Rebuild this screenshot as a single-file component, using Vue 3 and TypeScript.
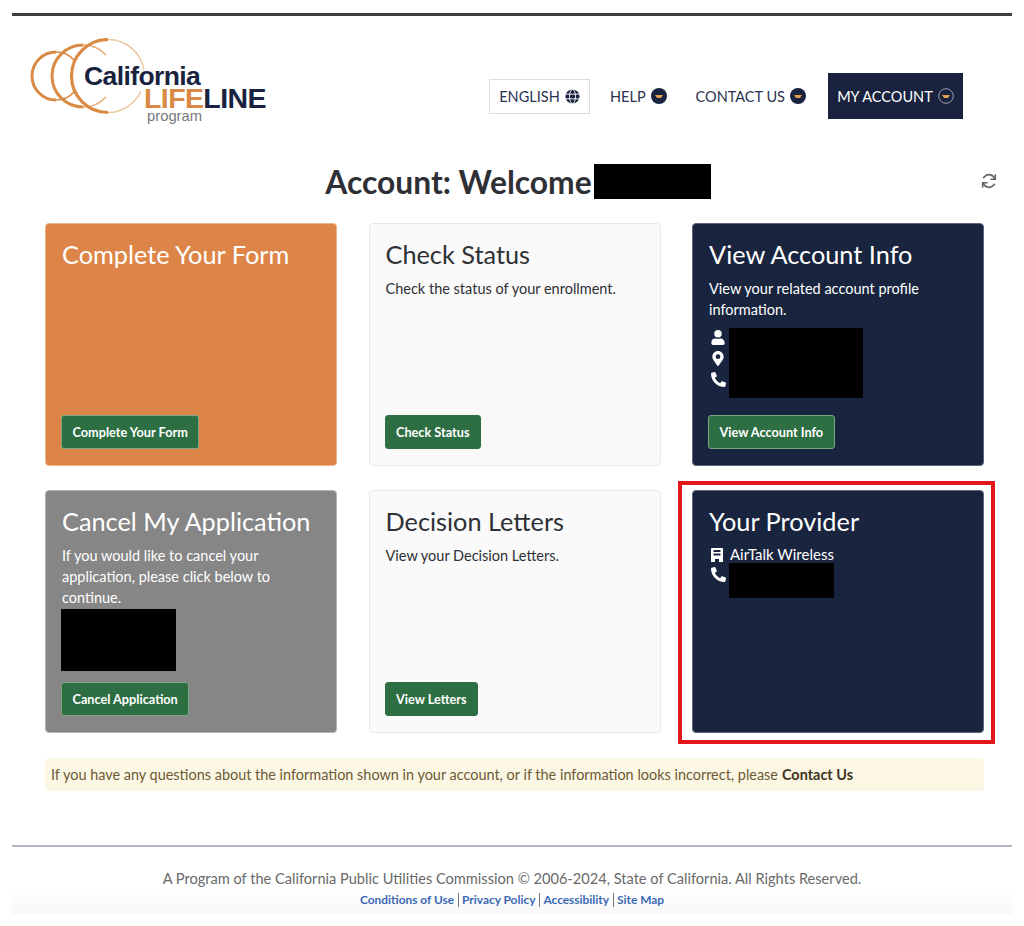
<script setup lang="ts">
interface Card {
  title: string
  text?: string
  button?: string
  tone: string
}
const cards: Card[] = [
  { title: 'Complete Your Form', button: 'Complete Your Form', tone: 'orange' },
  { title: 'Check Status', text: 'Check the status of your enrollment.', button: 'Check Status', tone: 'light' },
  { title: 'View Account Info', text: 'View your related account profile information.', button: 'View Account Info', tone: 'navy' },
  { title: 'Cancel My Application', text: 'If you would like to cancel your application, please click below to continue.', button: 'Cancel Application', tone: 'grey' },
  { title: 'Decision Letters', text: 'View your Decision Letters.', button: 'View Letters', tone: 'light' },
  { title: 'Your Provider', tone: 'navy' }
]
const links = ['Conditions of Use', 'Privacy Policy', 'Accessibility', 'Site Map']
</script>

<template>
  <div class="page">
    <header class="header">
      <svg class="logo" width="240" height="92" viewBox="0 0 240 92" role="img" aria-label="California LifeLine program">
        <g fill="none" stroke="#d98a45">
          <path d="M26 14A24 24 0 1 0 26 62" stroke-width="3" />
          <path d="M26 14A24 24 0 0 1 44 22M44 54A24 24 0 0 1 26 62" stroke-width="1.6" />
          <path d="M53 7A31 31 0 1 0 53 69" stroke-width="3" />
          <path d="M53 7A31 31 0 0 1 76 17M76 59A31 31 0 0 1 53 69" stroke="#e2ab77" stroke-width="1.5" />
          <path d="M78 1.5A36.5 36.5 0 1 0 78 74.500" stroke-width="3.2" />
          <path d="M78 1.5A36.5 36.5 0 0 1 114 32M111 53A36.5 36.500 0 0 1 78 74.5" stroke="#e9c79f" stroke-width="1.5" />
        </g>
        <text x="54" y="47" class="logo-ca">California</text>
        <text x="114" y="70" class="logo-life">LIFE<tspan fill="#19233f">LINE</tspan></text>
        <text x="117" y="83" class="logo-prog">program</text>
      </svg>
      <nav class="nav">
        <a class="lang">ENGLISH
          <svg width="15" height="15" viewBox="0 0 16 16" fill="none" stroke="#19233f" stroke-width="1.5">
            <circle cx="8" cy="8" r="7.5" fill="#19233f" stroke="none" />
            <g stroke="#fff" stroke-width="1"><ellipse cx="8" cy="8" rx="3.2" ry="7.5" /><path d="M.5 5.500h15M.5 10.500h15" /></g>
          </svg>
        </a>
        <a class="item help">HELP
          <svg class="caret" width="16" height="16" viewBox="0 0 16 16"><circle cx="8" cy="8" r="8" fill="#19233f" /><path d="M4 7h8l-2 3H6z" fill="#e2a04f" /></svg>
        </a>
        <a class="item contact">CONTACT US
          <svg class="caret" width="16" height="16" viewBox="0 0 16 16"><circle cx="8" cy="8" r="8" fill="#19233f" /><path d="M4 7h8l-2 3H6z" fill="#e2a04f" /></svg>
        </a>
        <a class="account">MY ACCOUNT
          <svg class="caret" width="16" height="16" viewBox="0 0 16 16"><circle cx="8" cy="8" r="7.3" fill="none" stroke="#9a9dab" stroke-width="1" /><path d="M4 7h8l-2 3H6z" fill="#e2a04f" /></svg>
        </a>
      </nav>
    </header>

    <div class="title-row">
      <h1 class="title">Account: Welcome<span class="redact name"></span></h1>
      <svg class="refresh" width="16" height="16" viewBox="0 0 512 512" fill="none" stroke="#666" stroke-width="56">
        <path d="M446 200A196 196 0 0 0 110 120L70 165" />
        <path d="M66 312A196 196 0 0 0 402 392L442 347" />
        <path d="M460 40v160H300M52 472V312h160" stroke-width="48" />
      </svg>
    </div>

    <section class="grid">
      <article v-for="c in cards" :key="c.title" class="card" :class="c.tone">
        <h2 class="card-title">{{ c.title }}</h2>
        <p v-if="c.text" class="card-text">{{ c.text }}</p>

        <div v-if="c.title === 'View Account Info'" class="info">
          <div class="info-icons">
            <svg width="14" height="15" viewBox="0 0 448 512" fill="#fff"><path d="M224 256a128 128 0 1 0 0-256 128 128 0 0 0 0 256zm90 32h-17a174 174 0 0 1-146 0h-17A134 134 0 0 0 0 422v42c0 27 21 48 48 48h352c27 0 48-21 48-48v-42c0-74-60-134-134-134z" /></svg>
            <svg width="12" height="15" viewBox="0 0 384 512" fill="#fff"><path d="M172 502C27 291 0 269 0 192 0 86 86 0 192 0s192 86 192 192c0 77-27 99-172 310a24 24 0 0 1-40 0zm20-230a80 80 0 1 0 0-160 80 80 0 0 0 0 160z" /></svg>
            <svg width="15" height="15" viewBox="0 0 512 512" fill="#fff"><path d="M493 24 389 0c-11-3-23 3-27 14l-48 112c-4 10-1 21 7 28l60 50a371 371 0 0 1-178 177l-49-60c-7-8-18-11-28-7L14 362c-11 5-17 16-14 28l24 104c3 10 12 18 24 18 256 0 464-207 464-464 0-11-8-21-19-24z" transform="matrix(-1 0 0 1 512 0)" /></svg>
          </div>
          <span class="redact info-block"></span>
        </div>

        <div v-if="c.title === 'Cancel My Application'" class="redact cancel-block"></div>

        <div v-if="c.title === 'Your Provider'" class="provider">
          <div class="provider-row">
            <svg width="12" height="14" viewBox="0 0 12 14" fill="#fff"><path fill-rule="evenodd" d="M1 0h10a1 1 0 0 1 1 1v13H8v-3H4v3H0V1a1 1 0 0 1 1-1zm1.500 2v2h7V2zm0 3.500v2h7v-2z" /></svg>
            <span>AirTalk Wireless</span>
          </div>
          <div class="provider-row phone">
            <svg width="15" height="15" viewBox="0 0 512 512" fill="#fff"><path d="M493 24 389 0c-11-3-23 3-27 14l-48 112c-4 10-1 21 7 28l60 50a371 371 0 0 1-178 177l-49-60c-7-8-18-11-28-7L14 362c-11 5-17 16-14 28l24 104c3 10 12 18 24 18 256 0 464-207 464-464 0-11-8-21-19-24z" transform="matrix(-1 0 0 1 512 0)" /></svg>
            <span class="redact phone-block"></span>
          </div>
          <span class="highlight"></span>
        </div>

        <a v-if="c.button" class="btn">{{ c.button }}</a>
      </article>
    </section>

    <p class="alert">If you have any questions about the information shown in your account, or if the information looks incorrect, please <b>Contact Us</b></p>

    <footer class="footer">
      <p class="copy">A Program of the California Public Utilities Commission © 2006-2024, State of California. All Rights Reserved.</p>
      <p class="links"><a v-for="l in links" :key="l">{{ l }}</a></p>
    </footer>
  </div>
</template>

<style scoped>
.page {
  box-sizing: border-box;
  width: 1000px;
  height: 902px;
  margin: 13px 0 0 12px;
  border-top: 3px solid #3d3f42;
  font-family: Lato, "Open Sans", sans-serif;
  color: #2b2f38;
  background: #fff;
  display: flex;
  flex-direction: column;
}
.header {
  flex: none;
  display: flex;
  align-items: flex-start;
  height: 148px;
}
.logo { margin: 22px 0 0 18px; flex: none; }
.logo-ca { font: 700 26.500px "Liberation Sans", Arial, sans-serif; fill: #19233f; letter-spacing: -0.6px; }
.logo-life { font: 700 28.500px "Liberation Sans", Arial, sans-serif; fill: #d98a45; letter-spacing: -0.6px; }
.logo-prog { font: 400 14.800px "Liberation Sans", Arial, sans-serif; fill: #77787c; }
.nav {
  display: flex;
  align-items: center;
  margin: 57px 0 0 219px;
  height: 46px;
  font-size: 14.500px;
  color: #2b3350;
}
.nav a { display: flex; align-items: center; white-space: nowrap; }
.lang {
  box-sizing: border-box;
  height: 35px;
  width: 101px;
  gap: 5px;
  justify-content: center;
  border: 1px solid #dcdde0;
  color: #2b3350;
}
.item { gap: 5px; }
.help { margin-left: 20px; }
.contact { margin-left: 29px; }
.account {
  box-sizing: border-box;
  height: 46px;
  width: 135px;
  margin-left: 22px;
  gap: 5px;
  justify-content: center;
  background: #19233f;
  color: #fff;
}
.title-row {
  flex: none;
  position: relative;
  display: flex;
  justify-content: center;
  height: 59px;
}
.title {
  display: flex;
  align-items: flex-start;
  margin: 0 0 0 12px;
  font-size: 31.800px;
  line-height: 36px;
  font-weight: 700;
  color: #2e3035;
}
.redact { display: block; background: #000; flex: none; }
.name { width: 117px; height: 35px; margin-left: 2px; }
.refresh { position: absolute; right: 15px; top: 9px; }
.grid {
  flex: none;
  display: grid;
  grid-template-columns: repeat(3, 292px);
  grid-template-rows: repeat(2, 243px);
  column-gap: 31.500px;
  row-gap: 24px;
  margin-left: 33px;
}
.card {
  box-sizing: border-box;
  display: flex;
  flex-direction: column;
  align-items: flex-start;
  padding: 15px 16px 16px;
  border-radius: 4px;
  position: relative;
}
.orange { background: #dd8548; color: #fff; border: 1px solid #eab48c; }
.light { background: #fafafa; color: #2e3035; border: 1px solid #e9e9ea; }
.navy { background: #19243e; color: #fff; border: 1px solid #5d6479; }
.grey { background: #868686; color: #fff; border: 1px solid #b5b5b5; }
.card-title {
  margin: 0;
  font-size: 25.300px;
  line-height: 31px;
  font-weight: 400;
}
.card-text {
  margin: 8px 0 0;
  font-size: 14.500px;
  line-height: 21px;
}
.info { display: flex; gap: 3px; margin-top: 8px; margin-left: 1px; }
.info-icons {
  display: flex;
  flex-direction: column;
  align-items: center;
  width: 16px;
  gap: 6px;
  padding-top: 2px;
}
.info-block { width: 134px; height: 70px; }
.cancel-block { width: 115px; height: 62px; margin: 1px 0 0 -1px; }
.provider { position: relative; margin-top: 10px; font-size: 15px; line-height: 21px; width: 100%; flex: 1; }
.provider-row { display: flex; align-items: center; gap: 7px; height: 15px; margin-left: 2px; }
.phone { align-items: flex-start; gap: 3px; margin-left: 2px; margin-top: 1px; }
.phone svg { margin-top: 4px; }
.phone-block { width: 105px; height: 35px; }
.highlight {
  position: absolute;
  left: -31px;
  top: -66px;
  width: 317px;
  height: 263px;
  box-sizing: border-box;
  border: 4px solid #e3161c;
  pointer-events: none;
}
.btn {
  margin: auto 0 0 -1px;
  box-sizing: border-box;
  height: 34px;
  padding: 0 10.500px;
  display: flex;
  align-items: center;
  border: 1px solid #7fa586;
  border-radius: 3px;
  background: #2e6e43;
  color: #fff;
  font-size: 12.700px;
  font-weight: 700;
}
.light .btn { border-color: #2e6e43; }
.alert {
  flex: none;
  box-sizing: border-box;
  width: 939px;
  height: 33px;
  margin: 25px 0 0 33px;
  padding: 0 6px;
  display: flex;
  align-items: center;
  gap: 4px;
  background: #fbf7e4;
  border-radius: 4px;
  font-size: 14.450px;
  color: #6d5a34;
  white-space: nowrap;
}
.alert b { color: #3f3420; }
.footer {
  flex: none;
  box-sizing: border-box;
  height: 69px;
  margin-top: 54px;
  border-top: 2px solid #b3b6c6;
  padding-top: 22px;
  text-align: center;
  background: linear-gradient(to bottom, #fff 65%, #f8f8f8 100%);
}
.copy { margin: 0; font-size: 14.600px; line-height: 20px; color: #6a6a6a; }
.links {
  display: flex;
  justify-content: center;
  margin: 4px 0 0;
  font-size: 11.900px;
  line-height: 14px;
  font-weight: 700;
  color: #3a69b3;
}
.links a { padding: 0 3.500px; border-left: 1px solid #777; }
.links a:first-child { border-left: 0; }
</style>

<style>
html, body { background: #fff; }
</style>
